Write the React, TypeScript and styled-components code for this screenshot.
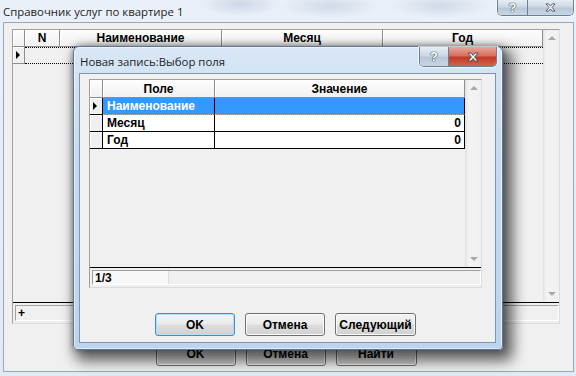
import React from "react";
import styled, { createGlobalStyle, css } from "styled-components";

const GlobalStyle = createGlobalStyle`
  html, body { margin: 0; padding: 0; background: #dfe8f3; }
  * { box-sizing: border-box; }
`;

const uiFont = `"Open Sans", "Noto Sans", sans-serif`;
const gridFont = `"Liberation Sans", Arial, sans-serif`;

const Screen = styled.div`
  position: relative;
  width: 576px;
  height: 376px;
  overflow: hidden;
`;

// outer window (the one behind)
const Window = styled.div`
  display: flex;
  flex-direction: column;
  width: 100%;
  height: 100%;
  background:
    radial-gradient(ellipse 40px 12px at 240px 4px, rgba(150, 170, 195, 0.35), transparent),
    radial-gradient(ellipse 50px 12px at 330px 6px, rgba(150, 170, 195, 0.3), transparent),
    radial-gradient(ellipse 50px 12px at 440px 6px, rgba(150, 170, 195, 0.3), transparent),
    linear-gradient(180deg, #e9f0f8 0%, #e1eaf5 100%);
`;

const TitleBar = styled.div<{ $h: number; $pad: number }>`
  display: flex;
  justify-content: space-between;
  align-items: flex-start;
  height: ${(p) => p.$h}px;
  padding-left: ${(p) => p.$pad}px;
  flex-shrink: 0;
`;

const TitleText = styled.div<{ $top: number }>`
  padding-top: ${(p) => p.$top}px;
  font-family: ${uiFont};
  font-size: 11.4px;
  line-height: 16px;
  color: #1e1e1e;
  white-space: nowrap;
`;

const CaptionGroup = styled.div<{ $right: number }>`
  display: flex;
  margin-right: ${(p) => p.$right}px;
  border: 1px solid #6f7f92;
  border-top: none;
  border-radius: 0 0 5px 5px;
  overflow: hidden;
  box-shadow: 0 0 0 1px rgba(255, 255, 255, 0.6);
`;

const CaptionButton = styled.div<{ $w: number; $h: number; $kind: "help" | "close" | "closeIdle" }>`
  display: flex;
  align-items: center;
  justify-content: center;
  width: ${(p) => p.$w}px;
  height: ${(p) => p.$h}px;
  font-family: ${gridFont};
  font-weight: bold;
  font-size: 13px;
  color: #fff;
  text-shadow: 0 0 1px #3b4756, 0 0 1px #3b4756, 0 0 1px #3b4756;
  ${(p) =>
    p.$kind === "close"
      ? css`
          background: linear-gradient(180deg, #e8a69b 0%, #d6705f 45%, #c23b27 55%, #d2634a 100%);
        `
      : css`
          background: linear-gradient(180deg, #e6edf5 0%, #cdd8e5 45%, #b8c7d8 55%, #c9d6e4 100%);
        `}
  & + & {
    border-left: 1px solid #6f7f92;
  }
`;

const CloseGlyph = ({ size }: { size: number }) => (
  <svg width={size + 4} height={size} viewBox="0 0 14 10">
    <path
      d="M2 1 L5 1 L7 3.5 L9 1 L12 1 L8.6 5 L12 9 L9 9 L7 6.5 L5 9 L2 9 L5.4 5 Z"
      fill="#fff"
      stroke="#3b4756"
      strokeWidth="0.9"
      strokeLinejoin="round"
    />
  </svg>
);

const Client = styled.div<{ $pad: string }>`
  flex: 1;
  display: flex;
  flex-direction: column;
  background: #f0f0f0;
  border: 1px solid #9aa8b8;
  padding: ${(p) => p.$pad};
  min-height: 0;
`;

const OuterClient = styled(Client)`
  margin: 0 2px 4px 3px;
`;

// grid parts
const GridFrame = styled.div<{ $h: number }>`
  display: flex;
  flex-direction: column;
  height: ${(p) => p.$h}px;
  flex-shrink: 0;
  border: 1px solid #a0a0a0;
  border-right-color: #dcdcdc;
  border-bottom-color: #dcdcdc;
  background: #f0f0f0;
`;

const GridMain = styled.div`
  flex: 1;
  display: flex;
  min-height: 0;
`;

const GridBody = styled.div`
  flex: 1;
  display: flex;
  flex-direction: column;
`;

const HeaderRow = styled.div<{ $cols: string; $h: number }>`
  display: grid;
  grid-template-columns: ${(p) => p.$cols};
  height: ${(p) => p.$h}px;
`;

const HeaderCell = styled.div`
  display: flex;
  align-items: center;
  justify-content: center;
  background: linear-gradient(180deg, #fdfdfd 0%, #f1f1f1 100%);
  border-right: 1px solid #8e8e8e;
  border-bottom: 1px solid #8e8e8e;
  box-shadow: inset 1px 1px 0 #ffffff;
  font-family: ${gridFont};
  font-weight: bold;
  font-size: 12px;
  color: #000;
  white-space: nowrap;
`;

const IndicatorCell = styled.div<{ $dark?: boolean }>`
  display: flex;
  align-items: center;
  padding-left: 3px;
  background: #f0f0f0;
  border-right: 1px solid ${(p) => (p.$dark ? "#000" : "#8e8e8e")};
  border-bottom: 1px solid ${(p) => (p.$dark ? "#000" : "#8e8e8e")};
  box-shadow: inset 1px 1px 0 #ffffff;
`;

const Pointer = styled.span`
  width: 0;
  height: 0;
  border-top: 4px solid transparent;
  border-bottom: 4px solid transparent;
  border-left: 4px solid #000;
`;

const DataRow = styled.div<{ $cols: string; $h: number }>`
  display: grid;
  grid-template-columns: ${(p) => p.$cols};
  height: ${(p) => p.$h}px;
`;

const DottedCell = styled.div`
  border-top: 1px dotted #000;
  border-bottom: 1px dotted #000;
`;

const Cell = styled.div<{ $selected?: boolean; $align?: "left" | "right" }>`
  display: flex;
  align-items: center;
  justify-content: ${(p) => (p.$align === "right" ? "flex-end" : "flex-start")};
  padding: 0 3px 0 4px;
  border-right: 1px solid #000;
  border-bottom: 1px solid #000;
  background: ${(p) => (p.$selected ? "#3399ff" : "#ffffff")};
  color: ${(p) => (p.$selected ? "#ffffff" : "#000")};
  font-family: ${gridFont};
  font-weight: bold;
  font-size: 12px;
  white-space: nowrap;
  ${(p) =>
    p.$selected &&
    css`
      border-bottom: 1px dotted #ff9a3c;
    `}
`;

const Scrollbar = styled.div`
  width: 16px;
  display: flex;
  flex-direction: column;
  justify-content: space-between;
  align-items: center;
  padding: 6px 0 6px 1px;
  background: linear-gradient(90deg, #e9e9e9 0px, #f3f3f3 3px, #f0f0f0 100%);
  border-left: 1px solid #e2e2e2;
`;

const Arrow = styled.span<{ $dir: "up" | "down" }>`
  width: 0;
  height: 0;
  border-left: 4px solid transparent;
  border-right: 4px solid transparent;
  ${(p) =>
    p.$dir === "up"
      ? css`
          border-bottom: 4px solid #a9a9a9;
        `
      : css`
          border-top: 4px solid #a9a9a9;
        `}
`;

const FooterLine = styled.div`
  height: 1px;
  background: #000;
  flex-shrink: 0;
`;

const Footer = styled.div<{ $h: number }>`
  height: ${(p) => p.$h}px;
  padding: 2px 0 2px 2px;
  display: flex;
  flex-shrink: 0;
`;

const FooterPanel = styled.div`
  flex: 1;
  display: flex;
  border: 1px solid #a0a0a0;
  border-right-color: #ffffff;
  border-bottom-color: #ffffff;
  background: #f0f0f0;
`;

const FooterLabel = styled.div<{ $w?: number }>`
  width: ${(p) => (p.$w ? `${p.$w}px` : "auto")};
  display: flex;
  align-items: center;
  padding-left: 2px;
  background: ${(p) => (p.$w ? "#f8f8f8" : "transparent")};
  border-right: ${(p) => (p.$w ? "1px solid #dcdcdc" : "none")};
  font-family: ${gridFont};
  font-weight: bold;
  font-size: 12px;
  color: #000;
`;

const ButtonRow = styled.div<{ $top: number }>`
  display: flex;
  justify-content: center;
  gap: 10px;
  margin-top: ${(p) => p.$top}px;
`;

const Button = styled.div<{ $w: number; $h: number; $focused?: boolean }>`
  width: ${(p) => p.$w}px;
  height: ${(p) => p.$h}px;
  display: flex;
  align-items: center;
  justify-content: center;
  border-radius: 3px;
  border: 1px solid ${(p) => (p.$focused ? "#3c8fd0" : "#707070")};
  background: linear-gradient(180deg, #f3f3f3 0%, #ebebeb 48%, #dddddd 52%, #d1d1d1 100%);
  box-shadow: inset 0 0 0 1px ${(p) => (p.$focused ? "#b3def6" : "#fbfbfb")};
  font-family: ${gridFont};
  font-weight: bold;
  font-size: 12px;
  color: #000;
`;

// inner dialog (floating on top of the outer window)
const Dialog = styled.div`
  position: absolute;
  left: 73px;
  top: 46px;
  width: 430px;
  height: 304px;
  display: flex;
  flex-direction: column;
  padding: 0 6px 6px 5px;
  border: 1px solid #5d7897;
  border-radius: 6px 6px 4px 4px;
  background: linear-gradient(180deg, #d9e7f6 0%, #c7dbf1 30%, #bcd4ee 100%);
  box-shadow:
    inset 0 0 0 1px rgba(255, 255, 255, 0.55),
    6px 7px 14px 4px rgba(0, 0, 0, 0.6),
    0 0 6px rgba(0, 0, 0, 0.35);
`;

const DialogClient = styled(Client)`
  border-color: #7f95ae;
`;

const outerCols = "12px 35px 162px 161px 1fr";
const innerCols = "13px 112px 1fr";

export default function App() {
  return (
    <Screen>
      <GlobalStyle />
      <Window>
        <TitleBar $h={22} $pad={3}>
          <TitleText $top={4}>Справочник услуг по квартире 1</TitleText>
          <CaptionGroup $right={2}>
            <CaptionButton $w={29} $h={15} $kind="help">?</CaptionButton>
            <CaptionButton $w={46} $h={15} $kind="closeIdle">
              <CloseGlyph size={9} />
            </CaptionButton>
          </CaptionGroup>
        </TitleBar>
        <OuterClient $pad="6px 13px 0 8px">
          <GridFrame $h={295}>
            <GridMain>
              <GridBody>
                <HeaderRow $cols={outerCols} $h={17}>
                  <HeaderCell />
                  <HeaderCell>N</HeaderCell>
                  <HeaderCell>Наименование</HeaderCell>
                  <HeaderCell>Месяц</HeaderCell>
                  <HeaderCell>Год</HeaderCell>
                </HeaderRow>
                <DataRow $cols="12px 1fr" $h={17}>
                  <IndicatorCell>
                    <Pointer />
                  </IndicatorCell>
                  <DottedCell />
                </DataRow>
              </GridBody>
              <Scrollbar>
                <Arrow $dir="up" />
                <Arrow $dir="down" />
              </Scrollbar>
            </GridMain>
            <FooterLine />
            <Footer $h={20}>
              <FooterPanel>
                <FooterLabel>+</FooterLabel>
              </FooterPanel>
            </Footer>
          </GridFrame>
          <ButtonRow $top={18}>
            <Button $w={80} $h={24}>OK</Button>
            <Button $w={80} $h={24}>Отмена</Button>
            <Button $w={81} $h={24}>Найти</Button>
          </ButtonRow>
        </OuterClient>
      </Window>

      <Dialog>
        <TitleBar $h={26} $pad={1}>
          <TitleText $top={7}>Новая запись:Выбор поля</TitleText>
          <CaptionGroup $right={-1}>
            <CaptionButton $w={28} $h={19} $kind="help">?</CaptionButton>
            <CaptionButton $w={48} $h={19} $kind="close">
              <CloseGlyph size={10} />
            </CaptionButton>
          </CaptionGroup>
        </TitleBar>
        <DialogClient $pad="5px 13px 0 9px">
          <GridFrame $h={209}>
            <GridMain>
              <GridBody>
                <HeaderRow $cols={innerCols} $h={18}>
                  <HeaderCell />
                  <HeaderCell>Поле</HeaderCell>
                  <HeaderCell>Значение</HeaderCell>
                </HeaderRow>
                <DataRow $cols={innerCols} $h={17}>
                  <IndicatorCell $dark>
                    <Pointer />
                  </IndicatorCell>
                  <Cell $selected>Наименование</Cell>
                  <Cell $selected />
                </DataRow>
                <DataRow $cols={innerCols} $h={17}>
                  <IndicatorCell $dark />
                  <Cell>Месяц</Cell>
                  <Cell $align="right">0</Cell>
                </DataRow>
                <DataRow $cols={innerCols} $h={17}>
                  <IndicatorCell $dark />
                  <Cell>Год</Cell>
                  <Cell $align="right">0</Cell>
                </DataRow>
              </GridBody>
              <Scrollbar>
                <Arrow $dir="up" />
                <Arrow $dir="down" />
              </Scrollbar>
            </GridMain>
            <FooterLine />
            <Footer $h={19}>
              <FooterPanel>
                <FooterLabel $w={76}>1/3</FooterLabel>
              </FooterPanel>
            </Footer>
          </GridFrame>
          <ButtonRow $top={25}>
            <Button $w={80} $h={23} $focused>OK</Button>
            <Button $w={80} $h={23}>Отмена</Button>
            <Button $w={81} $h={23}>Следующий</Button>
          </ButtonRow>
        </DialogClient>
      </Dialog>
    </Screen>
  );
}
